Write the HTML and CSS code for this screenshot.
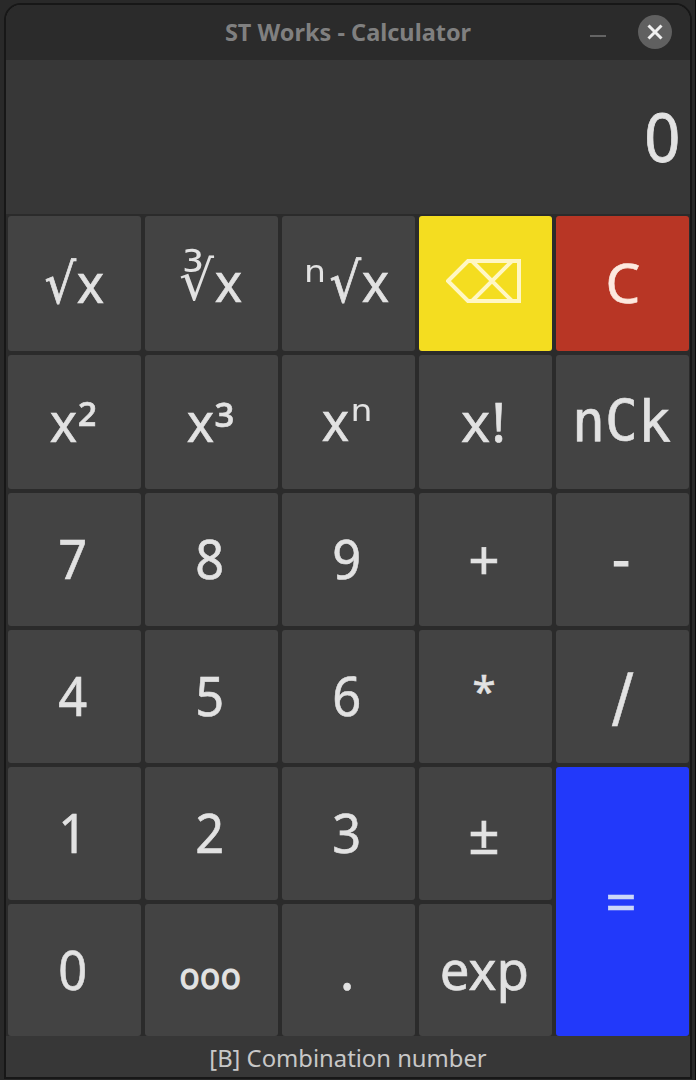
FILE: index.html
```html
<!DOCTYPE html>
<html lang="en">
<head>
<meta charset="utf-8">
<title>ST Works - Calculator</title>
<link rel="stylesheet" href="styles.css">
</head>
<body>
<main class="window">
  <header class="titlebar">
    <h1 class="title">ST Works - Calculator</h1>
    <div class="controls">
      <span class="minimize"></span>
      <span class="close"><svg viewBox="0 0 34 34" width="34" height="34"><path d="M10.5 10.5 23.5 23.5M23.5 10.5 10.5 23.5"/></svg></span>
    </div>
  </header>
  <output class="display"><span class="value">0</span></output>
  <section class="keys">
    <button class="key"><span class="glyph root">√</span><span class="glyph x">x</span></button>
    <button class="key raised"><span class="glyph cube">∛</span><span class="glyph x">x</span></button>
    <button class="key raised"><span class="glyph sup-n">ⁿ</span><span class="glyph root">√</span><span class="glyph x">x</span></button>
    <button class="key yellow"><svg class="erase" viewBox="0 0 76 44" width="76" height="44"><path d="M2 22 22 2H73V42H22ZM26 2 66 42M66 2 26 42"/></svg></button>
    <button class="key red"><span class="glyph clear">C</span></button>

    <button class="key"><span class="glyph x">x</span><span class="glyph sup">²</span></button>
    <button class="key"><span class="glyph x">x</span><span class="glyph sup">³</span></button>
    <button class="key raised"><span class="glyph x">x</span><span class="glyph sup-n">ⁿ</span></button>
    <button class="key"><span class="glyph fact">x!</span></button>
    <button class="key raised"><span class="glyph mono">nCk</span></button>

    <button class="key"><span class="glyph digit">7</span></button>
    <button class="key"><span class="glyph digit">8</span></button>
    <button class="key"><span class="glyph digit">9</span></button>
    <button class="key"><span class="glyph plus">+</span></button>
    <button class="key"><span class="glyph minus">-</span></button>

    <button class="key"><span class="glyph digit">4</span></button>
    <button class="key"><span class="glyph digit">5</span></button>
    <button class="key"><span class="glyph digit">6</span></button>
    <button class="key"><span class="glyph star">*</span></button>
    <button class="key"><span class="glyph slash">/</span></button>

    <button class="key"><span class="glyph digit">1</span></button>
    <button class="key"><span class="glyph digit">2</span></button>
    <button class="key"><span class="glyph digit">3</span></button>
    <button class="key"><span class="glyph plus">±</span></button>
    <button class="key blue"><span class="glyph plus">=</span></button>

    <button class="key"><span class="glyph digit">0</span></button>
    <button class="key"><span class="glyph zeros">ooo</span></button>
    <button class="key"><span class="glyph">.</span></button>
    <button class="key"><span class="glyph exp">exp</span></button>
  </section>
  <footer class="status"><span class="hint">[B] Combination number</span></footer>
</main>
</body>
</html>
```
FILE: styles.css
```css
* { box-sizing: border-box; }
body {
  margin: 0;
  height: 1080px;
  padding: 3px 3px 1px 4px;
  overflow: hidden;
  background: #292929;
  border-right: 1px solid #0b0b0b;
  font-family: "Noto Sans", "DejaVu Sans", sans-serif;
  color: #e2e2e2;
}
.window {
  height: 1076px;
  display: flex;
  flex-direction: column;
  background: #373737;
  border: 2px solid #171717;
  border-radius: 17px 17px 0 0;
  overflow: hidden;
}
.titlebar {
  height: 55px;
  flex: none;
  display: grid;
  grid-template-columns: 1fr auto 1fr;
  align-items: center;
  background: #2b2b2b;
}
.title {
  grid-column: 2;
  margin: 0;
  font-size: 23.5px;
  line-height: 55px;
  font-weight: 700;
  color: #808080;
  white-space: nowrap;
}
.controls {
  display: flex;
  justify-content: flex-end;
  align-items: center;
  gap: 32px;
  padding: 0 18px 2px 0;
}
.minimize { width: 16px; height: 2px; margin-top: 8px; background: #646464; }
.close { width: 34px; height: 34px; border-radius: 50%; background: #606060; }
.close svg { display: block; fill: none; stroke: #f0f0f0; stroke-width: 3; }
.display {
  height: 152px;
  flex: none;
  display: flex;
  align-items: center;
  justify-content: flex-end;
  padding-right: 8px;
}
.value {
  font-size: 68px;
  line-height: 90px;
  transform: scaleX(.93);
  -webkit-text-stroke: .8px currentColor;
}
.keys {
  flex: none;
  display: grid;
  grid-template-columns: repeat(5, 133px);
  grid-template-rows: 135px 134px 133px 133px 133px 132px;
  gap: 4px;
  padding: 4px 0 0 2px;
  background: linear-gradient(#2b2b2b, #2b2b2b) 0 2px no-repeat;
}
.key {
  display: flex;
  align-items: center;
  justify-content: center;
  margin: 0;
  padding: 0 3px 3px 0;
  border: 0;
  border-radius: 3px;
  background: #434343;
  color: inherit;
  font: 400 55px/76px "Noto Sans", "DejaVu Sans", sans-serif;
}
.raised { padding-bottom: 5px; }
.yellow { background: #f4dd20; padding-bottom: 6px; }
.red { background: #b83625; color: #fde9df; }
.blue { grid-row: span 2; background: #2239fa; color: #cbd6f8; }
.glyph { display: block; white-space: pre; -webkit-text-stroke: .6px currentColor; }
.digit { transform: scaleX(.92); }
.x { transform: scaleX(.94); }
.root { -webkit-text-stroke-width: .8px; transform: scaleX(.9); transform-origin: right; }
.erase { fill: none; stroke: #fff7c4; stroke-width: 4; }
.cube { font-family: "DejaVu Sans"; -webkit-text-stroke-width: 0; padding-left: 2px; }
.sup-n { font-family: "DejaVu Sans"; -webkit-text-stroke-width: 0; }
.sup { padding-top: 14px; }
.clear { padding-left: 4px; }
.mono {
  padding-top: 3px;
  font: 57px/76px "DejaVu Sans Mono", monospace;
  transform: scaleX(.96);
}
.fact { letter-spacing: 1px; }
.plus { padding-top: 2px; }
.minus { -webkit-text-stroke-width: 1.2px; }
.star { font-size: 42px; padding-bottom: 8px; }
.slash { padding: 3px 0 0 3px; font-size: 75px; transform: scaleX(.8); }
.exp { transform: scaleX(.96); }
.zeros {
  font-size: 37px;
  padding-top: 12px;
  letter-spacing: .5px;
  transform: scaleX(.9);
  -webkit-text-stroke-width: 1.2px;
}
.status { flex: 1; text-align: center; line-height: 44px; color: #c8c8c8; }
.hint { font-size: 23.8px; }
```
